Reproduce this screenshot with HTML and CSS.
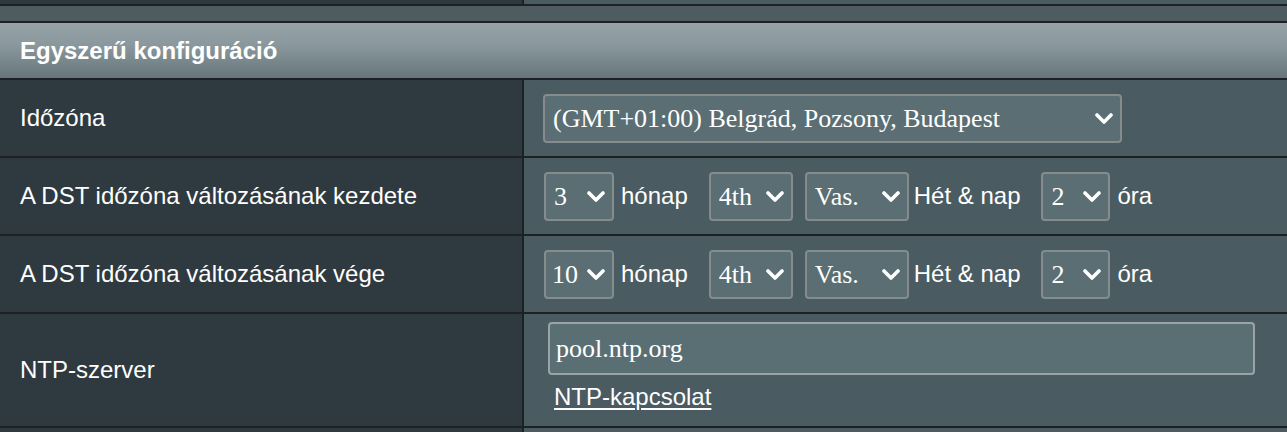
FILE: index.html
```html
<!DOCTYPE html>
<html lang="hu">
<head>
<meta charset="utf-8">
<title>Egyszerű konfiguráció</title>
<link rel="stylesheet" href="styles.css">
</head>
<body>
<div class="page">
  <div class="row prev">
    <div class="cell-l"></div>
    <div class="cell-r"></div>
  </div>
  <div class="gap"></div>
  <div class="header">Egyszerű konfiguráció</div>

  <div class="row r1">
    <div class="cell-l">Időzóna</div>
    <div class="cell-r tz">
      <div class="sel sel-tz">
        <select><option>(GMT+01:00) Belgrád, Pozsony, Budapest</option></select>
        <svg class="chev" viewBox="0 0 18 12"><path d="M2 2 L9 9 L16 2" fill="none" stroke="#fff" stroke-width="3.6" stroke-linecap="round" stroke-linejoin="round"/></svg>
      </div>
    </div>
  </div>

  <div class="row r2">
    <div class="cell-l">A DST időzóna változásának kezdete</div>
    <div class="cell-r controls">
      <div class="sel sel-m"><select><option>3</option></select><svg class="chev" viewBox="0 0 18 12"><path d="M2 2 L9 9 L16 2" fill="none" stroke="#fff" stroke-width="3.6" stroke-linecap="round" stroke-linejoin="round"/></svg></div>
      <span class="lbl lbl-m">hónap</span>
      <div class="sel sel-w"><select><option>4th</option></select><svg class="chev" viewBox="0 0 18 12"><path d="M2 2 L9 9 L16 2" fill="none" stroke="#fff" stroke-width="3.6" stroke-linecap="round" stroke-linejoin="round"/></svg></div>
      <div class="sel sel-d"><select><option>Vas.</option></select><svg class="chev" viewBox="0 0 18 12"><path d="M2 2 L9 9 L16 2" fill="none" stroke="#fff" stroke-width="3.6" stroke-linecap="round" stroke-linejoin="round"/></svg></div>
      <span class="lbl lbl-d">Hét &amp; nap</span>
      <div class="sel sel-h"><select><option>2</option></select><svg class="chev" viewBox="0 0 18 12"><path d="M2 2 L9 9 L16 2" fill="none" stroke="#fff" stroke-width="3.6" stroke-linecap="round" stroke-linejoin="round"/></svg></div>
      <span class="lbl">óra</span>
    </div>
  </div>

  <div class="row r3">
    <div class="cell-l">A DST időzóna változásának vége</div>
    <div class="cell-r controls">
      <div class="sel sel-m"><select class="tight"><option>10</option></select><svg class="chev" viewBox="0 0 18 12"><path d="M2 2 L9 9 L16 2" fill="none" stroke="#fff" stroke-width="3.6" stroke-linecap="round" stroke-linejoin="round"/></svg></div>
      <span class="lbl lbl-m">hónap</span>
      <div class="sel sel-w"><select><option>4th</option></select><svg class="chev" viewBox="0 0 18 12"><path d="M2 2 L9 9 L16 2" fill="none" stroke="#fff" stroke-width="3.6" stroke-linecap="round" stroke-linejoin="round"/></svg></div>
      <div class="sel sel-d"><select><option>Vas.</option></select><svg class="chev" viewBox="0 0 18 12"><path d="M2 2 L9 9 L16 2" fill="none" stroke="#fff" stroke-width="3.6" stroke-linecap="round" stroke-linejoin="round"/></svg></div>
      <span class="lbl lbl-d">Hét &amp; nap</span>
      <div class="sel sel-h"><select><option>2</option></select><svg class="chev" viewBox="0 0 18 12"><path d="M2 2 L9 9 L16 2" fill="none" stroke="#fff" stroke-width="3.6" stroke-linecap="round" stroke-linejoin="round"/></svg></div>
      <span class="lbl">óra</span>
    </div>
  </div>

  <div class="row r4">
    <div class="cell-l">NTP-szerver</div>
    <div class="cell-r ntp">
      <input class="txt" type="text" value="pool.ntp.org">
      <a class="link" href="#">NTP-kapcsolat</a>
    </div>
  </div>

  <div class="row next">
    <div class="cell-l"></div>
    <div class="cell-r"></div>
  </div>
</div>
</body>
</html>
```

FILE: styles.css
```css
html, body {
  margin: 0;
  padding: 0;
  background: #4a5b61;
  overflow: hidden;
}

.page {
  width: 1287px;
  font-family: "Liberation Sans", Arial, sans-serif;
  color: #ffffff;
}

.row {
  display: flex;
  border-bottom: 2px solid #1d2123;
}

.cell-l {
  width: 524px;
  flex: none;
  box-sizing: border-box;
  background: #2f3a40;
  border-right: 2px solid #1d2123;
  padding-left: 20px;
  display: flex;
  align-items: center;
  font-size: 24px;
  color: #ffffff;
}

.cell-r {
  flex: 1;
  background: #4a5b61;
  display: flex;
  align-items: center;
  padding-left: 20px;
}

.cell-r.tz { padding-left: 19px; }

.prev { height: 4px; }

.gap {
  height: 15px;
  background: #4e5b61;
  border-bottom: 2px solid #1d2123;
}

.header {
  height: 57px;
  box-sizing: border-box;
  padding-left: 20px;
  display: flex;
  align-items: center;
  font-weight: bold;
  font-size: 24px;
  background: linear-gradient(to bottom, #96a3a8 0%, #8a989d 40%, #67767c 100%);
  border-bottom: 2px solid #1d2123;
}

.r1, .r2, .r3 { height: 78px; box-sizing: border-box; }
.r4 { height: 114px; box-sizing: border-box; }
.next { height: 10px; }

.sel {
  position: relative;
  display: inline-flex;
  flex: none;
}

.sel select {
  -webkit-appearance: none;
  appearance: none;
  box-sizing: border-box;
  height: 49px;
  margin: 0;
  background: #5a6e73;
  border: 2px solid #868c8e;
  border-radius: 4px;
  color: #ffffff;
  font-family: "Liberation Serif", "Times New Roman", serif;
  font-size: 26px;
  padding: 0 0 0 8px;
  outline: none;
}

.sel select.tight { padding-left: 6px; }

.chev {
  position: absolute;
  top: 19px;
  right: 9px;
  width: 18px;
  height: 12px;
  pointer-events: none;
}

.sel-tz select { width: 579px; }

.controls .sel-m select { width: 70px; }
.controls .sel-w select { width: 84px; }
.controls .sel-d select { width: 104px; }
.controls .sel-h select { width: 69px; }

.controls .sel-w { margin-right: 12px; }

.lbl {
  font-size: 24px;
  margin-left: 7px;
}
.lbl-m, .lbl-d { margin-right: 21px; }
.lbl-d { margin-left: 5px; }

.ntp {
  flex-direction: column;
  align-items: flex-start;
  justify-content: flex-start;
  padding-left: 24px;
  padding-top: 8px;
  box-sizing: border-box;
}

.txt {
  box-sizing: border-box;
  width: 707px;
  height: 53px;
  margin: 0;
  background: #5a6f74;
  border: 2px solid #9aa3a6;
  border-radius: 4px;
  color: #ffffff;
  font-family: "Liberation Serif", "Times New Roman", serif;
  font-size: 26px;
  padding: 0 0 0 6px;
  outline: none;
}

.link {
  margin-top: 8px;
  margin-left: 6px;
  color: #ffffff;
  font-size: 24px;
  text-decoration: underline;
  text-underline-offset: 3px;
}
```
